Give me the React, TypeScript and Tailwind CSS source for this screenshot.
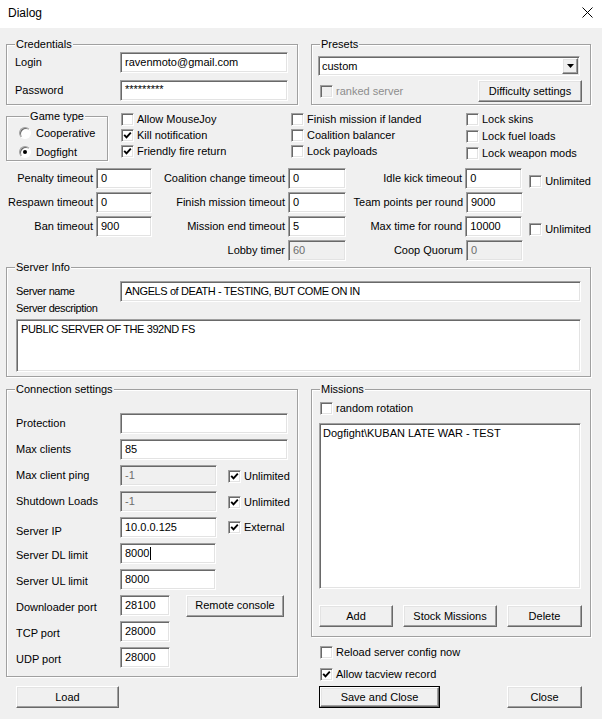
import React from 'react'

const sunken =
  'border border-t-[#a0a0a0] border-l-[#a0a0a0] border-r-white border-b-white shadow-[inset_1px_1px_0_#696969,inset_-1px_-1px_0_#e3e3e3]'
const raised =
  'border border-t-white border-l-white border-r-[#696969] border-b-[#696969] shadow-[inset_-1px_-1px_0_#a0a0a0,inset_1px_1px_0_#e3e3e3] bg-[#f0f0f0]'

type FieldProps = {
  value?: string
  w: string
  disabled?: boolean
  className?: string
  cursor?: boolean
}

const Field = ({value = '', w, disabled = false, className = '', cursor = false}: FieldProps) => (
  <div
    className={`${w} h-[21px] shrink-0 flex items-center pl-[4px] whitespace-nowrap ${sunken} ${
      disabled ? 'bg-[#f0f0f0] text-[#6d6d6d]' : 'bg-white'
    } ${className}`}
  >
    {value}
    {cursor && <span className="inline-block w-[1px] h-[13px] bg-black ml-[1px]" />}
  </div>
)

const Check = ({
  label,
  checked = false,
  disabled = false,
  className = '',
}: {
  label?: string
  checked?: boolean
  disabled?: boolean
  className?: string
}) => (
  <div className={`flex items-center ${className}`}>
    <span
      className={`w-[13px] h-[13px] shrink-0 flex items-center justify-center ${sunken} ${
        disabled ? 'bg-[#f0f0f0]' : 'bg-white'
      }`}
    >
      {checked && (
        <svg width="9" height="9" viewBox="0 0 9 9">
          <path d="M1.2 3.8 L3.5 6.3 L7.8 1.6" fill="none" stroke="#000" strokeWidth="1.9" />
        </svg>
      )}
    </span>
    {label && (
      <span className={`ml-[3px] whitespace-nowrap ${disabled ? 'text-[#8d8d8d]' : ''}`}>{label}</span>
    )}
  </div>
)

const Radio = ({label, selected = false}: {label: string; selected?: boolean}) => (
  <div className="flex items-center h-[16px]">
    <span className="w-[12px] h-[12px] rounded-full bg-white border border-t-[#a0a0a0] border-l-[#a0a0a0] border-r-white border-b-white shadow-[inset_1px_1px_0_#696969] flex items-center justify-center">
      {selected && <span className="w-[4px] h-[4px] rounded-full bg-black" />}
    </span>
    <span className="ml-[5px]">{label}</span>
  </div>
)

const Btn = ({label, w, className = ''}: {label: string; w: string; className?: string}) => (
  <div className={`${w} h-[22px] shrink-0 flex items-center justify-center ${raised} ${className}`}>{label}</div>
)

const Group = ({
  label,
  className = '',
  centered = false,
  children,
}: {
  label: string
  className?: string
  centered?: boolean
  children?: React.ReactNode
}) => (
  <div className={`relative shrink-0 border border-[#a0a0a0] shadow-[inset_1px_1px_0_#fff,1px_1px_0_#fff] ${className}`}>
    <span
      className={`absolute top-[-7px] bg-[#f0f0f0] px-[1px] whitespace-nowrap ${
        centered ? 'left-1/2 -translate-x-1/2' : 'left-[8px]'
      }`}
    >
      {label}
    </span>
    {children}
  </div>
)

const TimeRow = ({label, value, w, disabled}: {label: string; value: string; w: string; disabled?: boolean}) => (
  <div className="flex items-center justify-end h-[21px]">
    <span className="whitespace-nowrap">{label}</span>
    <Field value={value} w={w} disabled={disabled} className="ml-[3px]" />
  </div>
)

const ConnRow = ({label, children, labelClass = ''}: {label: string; children: React.ReactNode; labelClass?: string}) => (
  <div className="flex items-center h-[21px]">
    <span className={`w-[104px] shrink-0 whitespace-nowrap ${labelClass}`}>{label}</span>
    {children}
  </div>
)

export default function App() {
  return (
    <div className="w-[602px] h-[719px] overflow-hidden bg-[#f0f0f0] text-black text-[11px] leading-[13px] font-['Liberation_Sans',Arial,sans-serif]">
      {/* title bar */}
      <div className="h-[28px] bg-white flex items-center justify-between pl-[8px] pr-[9px]">
        <span className="text-[12px] leading-[14px] -mt-[3px]">Dialog</span>
        <svg width="11" height="11" viewBox="0 0 11 11" className="-mt-[3px]">
          <path d="M0.5 0.5 L10.5 10.5 M10.5 0.5 L0.5 10.5" stroke="#000" strokeWidth="1" />
        </svg>
      </div>

      <div className="pl-[6px]">
        {/* credentials + presets */}
        <div className="flex mt-[16px]">
          <Group label="Credentials" className="w-[292px] h-[61px]">
            <div className="flex flex-col gap-[7px] pt-[7px] pl-[8px]">
              <div className="flex items-center">
                <span className="w-[105px]">Login</span>
                <Field value="ravenmoto@gmail.com" w="w-[168px]" />
              </div>
              <div className="flex items-center">
                <span className="w-[105px]">Password</span>
                <Field value="*********" w="w-[168px]" className="items-start pt-[2px]" />
              </div>
            </div>
          </Group>

          <Group label="Presets" className="w-[280px] h-[61px] ml-[13px]">
            <div className="pl-[6px] pt-[11px]">
              <div className={`w-[262px] h-[20px] flex items-center justify-between bg-white ${sunken}`}>
                <span className="pl-[3px]">custom</span>
                <div className={`w-[16px] h-[16px] mr-[1px] flex items-center justify-center ${raised}`}>
                  <svg width="7" height="4" viewBox="0 0 7 4">
                    <path d="M0 0 H7 L3.5 4 Z" fill="#000" />
                  </svg>
                </div>
              </div>
              <div className="w-[264px] mt-[4px] flex items-center justify-between">
                <Check label="ranked server" disabled className="ml-[2px]" />
                <Btn label="Difficulty settings" w="w-[104px]" />
              </div>
            </div>
          </Group>
        </div>

        {/* game type + flags */}
        <div className="flex items-start h-[48px] mt-[8px]">
          <Group label="Game type" centered className="w-[102px] h-[45px] mt-[3px]">
            <div className="flex flex-col gap-[3px] pt-[8px] pl-[12px]">
              <Radio label="Cooperative" />
              <Radio label="Dogfight" selected />
            </div>
          </Group>
          <div className="w-[170px] ml-[13px] flex flex-col gap-[3px]">
            <Check label="Allow MouseJoy" />
            <Check label="Kill notification" checked />
            <Check label="Friendly fire return" checked />
          </div>
          <div className="w-[175px] flex flex-col gap-[3px]">
            <Check label="Finish mission if landed" />
            <Check label="Coalition balancer" />
            <Check label="Lock payloads" />
          </div>
          <div className="flex flex-col gap-[4px]">
            <Check label="Lock skins" />
            <Check label="Lock fuel loads" />
            <Check label="Lock weapon mods" />
          </div>
        </div>

        {/* timeouts */}
        <div className="flex items-start mt-[7px]">
          <div className="w-[146px] flex flex-col gap-[3px]">
            <TimeRow label="Penalty timeout" value="0" w="w-[56px]" />
            <TimeRow label="Respawn timeout" value="0" w="w-[56px]" />
            <TimeRow label="Ban timeout" value="900" w="w-[56px]" />
          </div>
          <div className="w-[194px] flex flex-col gap-[3px]">
            <TimeRow label="Coalition change timeout" value="0" w="w-[58px]" />
            <TimeRow label="Finish mission timeout" value="0" w="w-[58px]" />
            <TimeRow label="Mission end timeout" value="5" w="w-[58px]" />
            <TimeRow label="Lobby timer" value="60" w="w-[58px]" disabled />
          </div>
          <div className="w-[245px] flex flex-col gap-[3px]">
            <div className="flex items-center">
              <div className="w-[177px]">
                <TimeRow label="Idle kick timeout" value="0" w="w-[57px]" />
              </div>
              <Check label="Unlimited" className="ml-[7px] mt-[6px]" />
            </div>
            <div className="w-[177px]">
              <TimeRow label="Team points per round" value="9000" w="w-[57px]" />
            </div>
            <div className="flex items-center">
              <div className="w-[177px]">
                <TimeRow label="Max time for round" value="10000" w="w-[57px]" />
              </div>
              <Check label="Unlimited" className="ml-[7px] mt-[6px]" />
            </div>
            <div className="w-[177px]">
              <TimeRow label="Coop Quorum" value="0" w="w-[57px]" disabled />
            </div>
          </div>
        </div>

        {/* server info */}
        <Group label="Server Info" className="w-[585px] h-[110px] mt-[6px]">
          <div className="pl-[9px] pt-[13px] tracking-[-0.4px]">
            <div className="flex items-center">
              <span className="w-[104px]">Server name</span>
              <Field value="ANGELS of DEATH - TESTING, BUT COME ON IN" w="w-[461px]" />
            </div>
            <div className="h-[13px] mt-[0px]">Server description</div>
            <div className={`w-[565px] h-[53px] mt-[4px] bg-white pl-[4px] pt-[3px] ${sunken}`}>
              PUBLIC SERVER OF THE 392ND FS
            </div>
          </div>
        </Group>

        {/* connection + missions */}
        <div className="flex items-start mt-[12px]">
          <div className="flex flex-col">
            <Group label="Connection settings" className="w-[292px] h-[288px]">
              <div className="flex flex-col gap-[5px] pl-[9px] pt-[23px]">
                <ConnRow label="Protection">
                  <Field w="w-[168px]" />
                </ConnRow>
                <ConnRow label="Max clients">
                  <Field value="85" w="w-[168px]" />
                </ConnRow>
                <ConnRow label="Max client ping">
                  <Field value="-1" w="w-[97px]" disabled />
                  <Check label="Unlimited" checked className="ml-[11px] mt-[2px]" />
                </ConnRow>
                <ConnRow label="Shutdown Loads">
                  <Field value="-1" w="w-[97px]" disabled />
                  <Check label="Unlimited" checked className="ml-[11px] mt-[2px]" />
                </ConnRow>
                <ConnRow label="Server IP" labelClass="mt-[7px]">
                  <Field value="10.0.0.125" w="w-[97px]" />
                  <Check label="External" checked className="ml-[11px]" />
                </ConnRow>
                <ConnRow label="Server DL limit" labelClass="mt-[3px]">
                  <Field value="8000" w="w-[96px]" cursor />
                </ConnRow>
                <ConnRow label="Server UL limit" labelClass="mt-[3px]">
                  <Field value="8000" w="w-[96px]" />
                </ConnRow>
                <ConnRow label="Downloader port" labelClass="mt-[3px]">
                  <Field value="28100" w="w-[50px]" />
                  <Btn label="Remote console" w="w-[98px]" className="ml-[16px]" />
                </ConnRow>
                <ConnRow label="TCP port" labelClass="mt-[3px]">
                  <Field value="28000" w="w-[50px]" />
                </ConnRow>
                <ConnRow label="UDP port" labelClass="mt-[3px]">
                  <Field value="28000" w="w-[50px]" />
                </ConnRow>
              </div>
            </Group>
            <Btn label="Load" w="w-[103px]" className="ml-[10px] mt-[9px]" />
          </div>

          <div className="flex flex-col ml-[13px]">
            <Group label="Missions" className="w-[280px] h-[248px]">
              <div className="pl-[7px] pt-[12px]">
                <Check label="random rotation" className="ml-[1px]" />
                <div className={`w-[262px] h-[166px] mt-[8px] bg-white pl-[3px] pt-[3px] whitespace-nowrap ${sunken}`}>
                  Dogfight\KUBAN LATE WAR - TEST
                </div>
                <div className="flex mt-[16px]">
                  <Btn label="Add" w="w-[74px]" />
                  <Btn label="Stock Missions" w="w-[94px]" className="ml-[10px]" />
                  <Btn label="Delete" w="w-[75px]" className="ml-[10px]" />
                </div>
              </div>
            </Group>
            <Check label="Reload server config now" className="ml-[9px] mt-[9px]" />
            <Check label="Allow tacview record" checked className="ml-[9px] mt-[9px]" />
            <div className="flex mt-[5px]">
              <div className="w-[121px] h-[22px] ml-[8px] border border-black">
                <Btn label="Save and Close" w="w-[119px] h-[20px]" className="!h-[20px]" />
              </div>
              <Btn label="Close" w="w-[75px]" className="ml-[67px]" />
            </div>
          </div>
        </div>
      </div>
    </div>
  )
}
